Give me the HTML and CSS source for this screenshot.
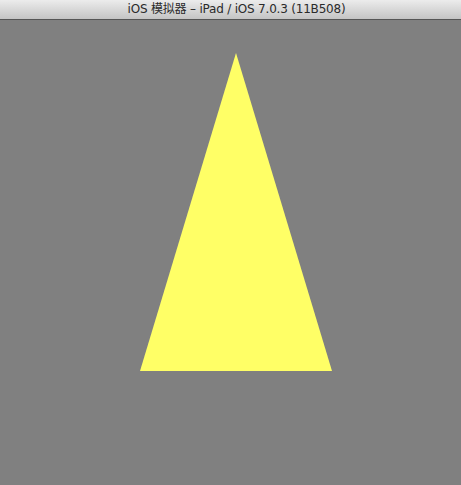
FILE: index.html
```html
<!DOCTYPE html>
<html>
<head>
<meta charset="utf-8">
<link rel="stylesheet" href="styles.css">
</head>
<body>
<div class="window">
  <div class="titlebar">iOS 模拟器 – iPad / iOS 7.0.3 (11B508)</div>
  <div class="screen">
    <svg class="canvas" width="461" height="465" viewBox="0 20 461 465">
      <polygon points="236,53 140,371 332,371" fill="#ffff66"/>
    </svg>
  </div>
</div>
</body>
</html>
```
FILE: styles.css
```css
html, body {
  margin: 0;
  padding: 0;
  width: 461px;
  height: 485px;
  overflow: hidden;
  background: #808080;
}
.window {
  display: flex;
  flex-direction: column;
  width: 461px;
  height: 485px;
}
.titlebar {
  height: 20px;
  flex: 0 0 20px;
  box-sizing: border-box;
  border-bottom: 1px solid #555;
  background: linear-gradient(#ececec, #c4c4c4);
  color: #2a2a2a;
  font-family: "DejaVu Sans", "Noto Sans CJK SC", sans-serif;
  font-size: 12px;
  letter-spacing: -0.2px;
  line-height: 19px;
  text-align: center;
  padding-left: 12px;
}
.screen {
  flex: 1;
  background: #808080;
}
.canvas {
  display: block;
}
```
